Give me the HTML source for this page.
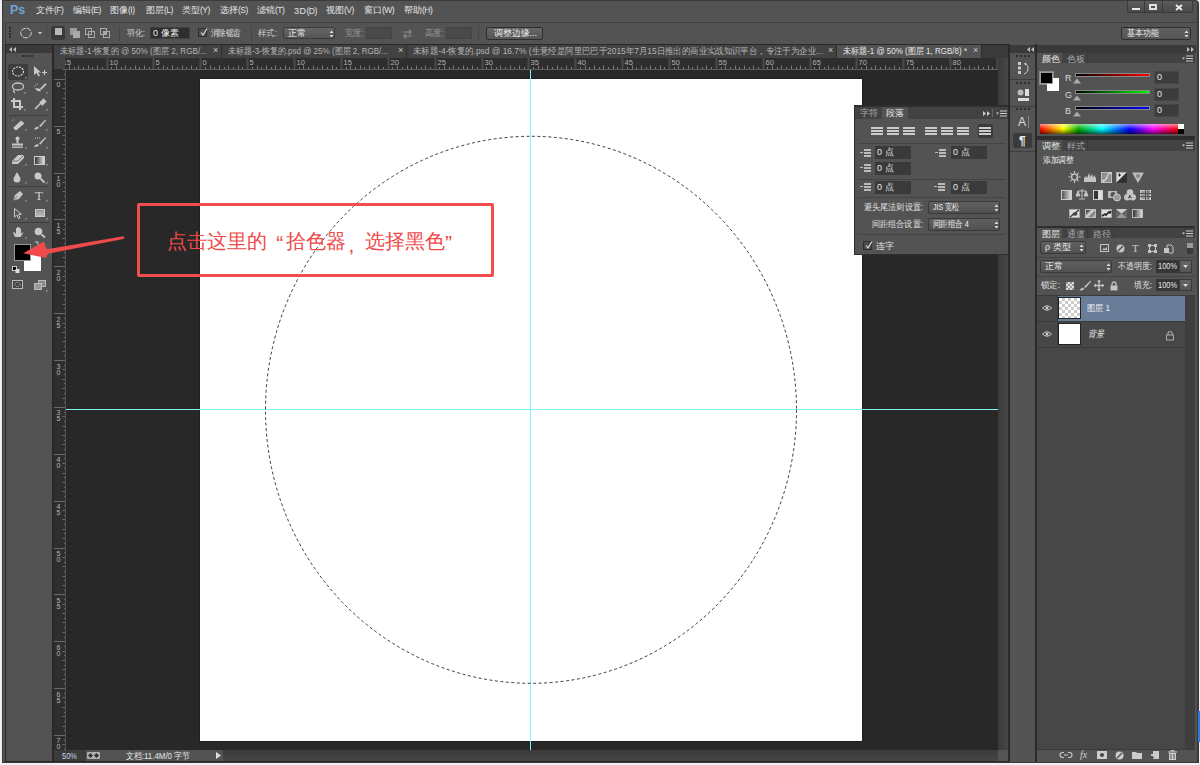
<!DOCTYPE html>
<html><head><meta charset="utf-8">
<style>
*{margin:0;padding:0;box-sizing:border-box}
html,body{width:1200px;height:765px;overflow:hidden;background:#eef0f4;font-family:"Liberation Sans",sans-serif;font-size:9px;color:#d8d8d8}
.a{position:absolute}
.t{white-space:nowrap;line-height:1}
svg{position:absolute;overflow:visible}
</style></head><body>

<div class="a" style="left:0px;top:0px;width:1200px;height:765px;background:#eef0f4;"></div>
<div class="a" style="left:2px;top:0px;width:1197px;height:763px;background:#3a3a3a;border-radius:0 4px 0 0;"></div>
<div class="a" style="left:3px;top:1px;width:1194px;height:761px;background:#535353;border-radius:0 3px 0 0;"></div>
<div class="a t" style="left:10px;top:4px;font-size:12.5px;font-weight:bold;color:#6fa6d8;letter-spacing:0px">Ps</div>
<div class="a t" style="left:36px;top:6px;font-size:9px;color:#e4e4e4">文件<span style="font-size:8.5px;letter-spacing:-0.5px;position:relative;top:-0.5px">(F)</span></div>
<div class="a t" style="left:73px;top:6px;font-size:9px;color:#e4e4e4">编辑<span style="font-size:8.5px;letter-spacing:-0.5px;position:relative;top:-0.5px">(E)</span></div>
<div class="a t" style="left:110px;top:6px;font-size:9px;color:#e4e4e4">图像<span style="font-size:8.5px;letter-spacing:-0.5px;position:relative;top:-0.5px">(I)</span></div>
<div class="a t" style="left:146px;top:6px;font-size:9px;color:#e4e4e4">图层<span style="font-size:8.5px;letter-spacing:-0.5px;position:relative;top:-0.5px">(L)</span></div>
<div class="a t" style="left:182px;top:6px;font-size:9px;color:#e4e4e4">类型<span style="font-size:8.5px;letter-spacing:-0.5px;position:relative;top:-0.5px">(Y)</span></div>
<div class="a t" style="left:220px;top:6px;font-size:9px;color:#e4e4e4">选择<span style="font-size:8.5px;letter-spacing:-0.5px;position:relative;top:-0.5px">(S)</span></div>
<div class="a t" style="left:257px;top:6px;font-size:9px;color:#e4e4e4">滤镜<span style="font-size:8.5px;letter-spacing:-0.5px;position:relative;top:-0.5px">(T)</span></div>
<div class="a t" style="left:294px;top:7px;font-size:9px;color:#e4e4e4;letter-spacing:0.5px">3D<span style="font-size:8.5px;letter-spacing:-0.5px;position:relative;top:-0.5px">(D)</span></div>
<div class="a t" style="left:326px;top:6px;font-size:9px;color:#e4e4e4">视图<span style="font-size:8.5px;letter-spacing:-0.5px;position:relative;top:-0.5px">(V)</span></div>
<div class="a t" style="left:364px;top:6px;font-size:9px;color:#e4e4e4">窗口<span style="font-size:8.5px;letter-spacing:-0.5px;position:relative;top:-0.5px">(W)</span></div>
<div class="a t" style="left:404px;top:6px;font-size:9px;color:#e4e4e4">帮助<span style="font-size:8.5px;letter-spacing:-0.5px;position:relative;top:-0.5px">(H)</span></div>
<div class="a" style="left:1127px;top:1px;width:66px;height:12px;background:linear-gradient(#5c5c5c,#4a4a4a);border:1px solid #3a3a3a;border-top:none;border-radius:0 0 3px 3px"></div>
<div class="a" style="left:1144px;top:1px;width:1px;height:12px;background:#3a3a3a;"></div>
<div class="a" style="left:1162px;top:1px;width:1px;height:12px;background:#3a3a3a;"></div>
<div class="a" style="left:1132px;top:8px;width:8px;height:2px;background:#e8e8e8;"></div>
<div class="a" style="left:1149px;top:4px;width:8px;height:6px;border:2px solid #e0e0e0;border-top-width:2px"></div>
<svg style="left:1175px;top:4px" width="8" height="7"><path d="M1 1L7 6M7 1L1 6" stroke="#eee" stroke-width="1.8"/></svg>
<div class="a" style="left:5px;top:22px;width:1191px;height:1px;background:#404040;"></div>
<div class="a" style="left:5px;top:22px;width:1px;height:22px;background:#3c3c3c;"></div>
<div class="a" style="left:9px;top:27px;width:2px;height:2px;background:#2a2a2a;"></div>
<div class="a" style="left:9px;top:30px;width:2px;height:2px;background:#2a2a2a;"></div>
<div class="a" style="left:9px;top:33px;width:2px;height:2px;background:#2a2a2a;"></div>
<div class="a" style="left:9px;top:36px;width:2px;height:2px;background:#2a2a2a;"></div>
<svg style="left:18px;top:26px" width="16" height="14"><ellipse cx="8" cy="7" rx="5.3" ry="4.8" fill="none" stroke="#ddd" stroke-width="0.9" stroke-dasharray="5 1"/></svg>
<svg style="left:38px;top:32px" width="6" height="4"><path d="M0 0h4l-2 2.5z" fill="#ccc"/></svg>
<div class="a" style="left:46px;top:26px;width:1px;height:15px;background:#464646;"></div>
<div class="a" style="left:51px;top:26px;width:14px;height:14px;background:#3a3a3a;border-radius:2px;"></div>
<div class="a" style="left:55px;top:28px;width:7px;height:7px;background:#b8b8b8;"></div>
<svg style="left:69px;top:27px" width="12" height="12"><rect x="1" y="1" width="7" height="7" fill="#999"/><rect x="4" y="4" width="7" height="7" fill="#aaa"/></svg>
<svg style="left:84px;top:27px" width="12" height="12"><rect x="1.5" y="1.5" width="6" height="6" fill="none" stroke="#aaa"/><rect x="4.5" y="4.5" width="6" height="6" fill="none" stroke="#aaa"/></svg>
<svg style="left:99px;top:27px" width="12" height="12"><rect x="1.5" y="1.5" width="6" height="6" fill="none" stroke="#aaa"/><rect x="4.5" y="4.5" width="6" height="6" fill="none" stroke="#aaa"/><rect x="4.5" y="4.5" width="3" height="3" fill="#aaa"/></svg>
<div class="a" style="left:119px;top:26px;width:1px;height:15px;background:#464646;"></div>
<div class="a t" style="left:127px;top:29px;font-size:9px;color:#d0d0d0;transform-origin:0 0;transform:scaleX(0.8774);">羽化:</div>
<div class="a" style="left:150px;top:27px;width:40px;height:12px;background:#2e2e2e;border:1px solid #404040;"></div>
<div class="a t" style="left:153px;top:29px;font-size:9px;color:#e8e8e8;">0 像素</div>
<div class="a" style="left:198px;top:28px;width:9px;height:9px;background:#4a4a4a;border:1px solid #2e2e2e;"></div>
<svg style="left:199px;top:28px" width="9" height="9"><path d="M2 4.5L4 7L8 0.5" fill="none" stroke="#ddd" stroke-width="1.2"/></svg>
<div class="a t" style="left:211px;top:29px;font-size:9px;color:#e0e0e0;transform-origin:0 0;transform:scaleX(0.8333);">消除锯齿</div>
<div class="a" style="left:251px;top:26px;width:1px;height:15px;background:#464646;"></div>
<div class="a t" style="left:258px;top:29px;font-size:9px;color:#d0d0d0;transform-origin:0 0;transform:scaleX(0.9261);">样式:</div>
<div class="a" style="left:283px;top:27px;width:52px;height:12px;background:linear-gradient(#666,#555);border:1px solid #3a3a3a;border-radius:2px"></div>
<div class="a t" style="left:288px;top:29px;font-size:9px;color:#f0f0f0;">正常</div>
<svg style="left:329px;top:30px" width="5" height="8"><path d="M0.5 3L2.5 0.5L4.5 3ZM0.5 5L2.5 7.5L4.5 5Z" fill="#ddd"/></svg>
<div class="a t" style="left:345px;top:29px;font-size:9px;color:#9a9a9a;transform-origin:0 0;transform:scaleX(0.9261);">宽度:</div>
<div class="a" style="left:366px;top:27px;width:26px;height:12px;background:#4a4a4a;border:1px solid #444;"></div>
<svg style="left:402px;top:29px" width="11" height="10"><path d="M1 3h8M7 1l2 2l-2 2M10 7H2M4 5L2 7l2 2" fill="none" stroke="#8a8a8a" stroke-width="1.2"/></svg>
<div class="a t" style="left:425px;top:29px;font-size:9px;color:#9a9a9a;transform-origin:0 0;transform:scaleX(0.9261);">高度:</div>
<div class="a" style="left:446px;top:27px;width:26px;height:12px;background:#4a4a4a;border:1px solid #444;"></div>
<div class="a" style="left:478px;top:26px;width:1px;height:15px;background:#464646;"></div>
<div class="a" style="left:486px;top:27px;width:57px;height:13px;background:linear-gradient(#666,#555);border:1px solid #2e2e2e;border-radius:2px"></div>
<div class="a t" style="left:494px;top:29px;font-size:9px;color:#f0f0f0;transform-origin:0 0;transform:scaleX(0.9882);">调整边缘...</div>
<div class="a" style="left:1121px;top:27px;width:70px;height:13px;background:linear-gradient(#606060,#555);border:1px solid #2e2e2e;border-radius:2px"></div>
<div class="a t" style="left:1127px;top:29px;font-size:9px;color:#f0f0f0;transform-origin:0 0;transform:scaleX(0.8889);">基本功能</div>
<svg style="left:1184px;top:30px" width="5" height="8"><path d="M0.5 3L2.5 0.5L4.5 3ZM0.5 5L2.5 7.5L4.5 5Z" fill="#ddd"/></svg>
<div class="a" style="left:5px;top:44px;width:49px;height:718px;background:#282828;"></div>
<div class="a" style="left:6px;top:45px;width:46px;height:8px;background:#3a3a3a;"></div>
<svg style="left:9px;top:47px" width="8" height="5"><path d="M3 0L0 2.5L3 5zM7 0L4 2.5L7 5z" fill="#bbb"/></svg>
<div class="a" style="left:6px;top:53px;width:46px;height:708px;background:#535353;"></div>
<div class="a" style="left:22px;top:55px;width:2px;height:2px;background:#2e2e2e;"></div>
<div class="a" style="left:25px;top:55px;width:2px;height:2px;background:#2e2e2e;"></div>
<div class="a" style="left:28px;top:55px;width:2px;height:2px;background:#2e2e2e;"></div>
<div class="a" style="left:31px;top:55px;width:2px;height:2px;background:#2e2e2e;"></div>
<div class="a" style="left:54px;top:44px;width:956px;height:718px;background:#282828;"></div>
<div class="a" style="left:54px;top:45px;width:954px;height:13px;background:#3a3a3a;"></div>
<div class="a" style="left:54px;top:45px;width:168px;height:13px;background:#424242;border-right:1px solid #2e2e2e;"></div>
<div class="a t" style="left:60px;top:47px;font-size:9px;color:#b4b4b4;transform-origin:0 0;transform:scaleX(0.9037);">未标题-1-恢复的 @ 50% (图层 2, RGB/...</div>
<div class="a t" style="left:213px;top:46px;font-size:9px;color:#ccc;">×</div>
<div class="a" style="left:222px;top:45px;width:185px;height:13px;background:#424242;border-right:1px solid #2e2e2e;"></div>
<div class="a t" style="left:228px;top:47px;font-size:9px;color:#b4b4b4;transform-origin:0 0;transform:scaleX(0.8905);">未标题-3-恢复的.psd @ 25% (图层 2, RGB/...</div>
<div class="a t" style="left:398px;top:46px;font-size:9px;color:#ccc;">×</div>
<div class="a" style="left:407px;top:45px;width:430px;height:13px;background:#424242;border-right:1px solid #2e2e2e;"></div>
<div class="a t" style="left:413px;top:47px;font-size:9px;color:#b4b4b4;transform-origin:0 0;transform:scaleX(0.9324);">未标题-4-恢复的.psd @ 16.7% (生意经是阿里巴巴于2015年7月15日推出的商业实战知识平台，专注于为企业...</div>
<div class="a t" style="left:828px;top:46px;font-size:9px;color:#ccc;">×</div>
<div class="a" style="left:837px;top:45px;width:145px;height:13px;background:#535353;border-right:1px solid #2e2e2e;"></div>
<div class="a t" style="left:843px;top:47px;font-size:9px;color:#e8e8e8;transform-origin:0 0;transform:scaleX(0.8910);">未标题-1 @ 50% (图层 1, RGB/8) *</div>
<div class="a t" style="left:973px;top:46px;font-size:9px;color:#ccc;">×</div>
<div class="a" style="left:54px;top:58px;width:944px;height:12px;background:#2e2e2e;"></div>
<div class="a" style="left:54px;top:58px;width:12px;height:692px;background:#2e2e2e;"></div>
<div class="a" style="left:54px;top:58px;width:11px;height:11px;background:#444;"></div>
<svg style="left:0;top:0" width="1200" height="765"><defs><clipPath id="hr"><rect x="65" y="58" width="933" height="12"/></clipPath><clipPath id="vr"><rect x="54" y="69" width="12" height="681"/></clipPath></defs><g clip-path="url(#hr)" stroke="#7a7a7a" stroke-width="1"><line x1="50.5" y1="65.5" x2="50.5" y2="69"/><line x1="55.5" y1="67" x2="55.5" y2="69"/><line x1="60.5" y1="58" x2="60.5" y2="69" stroke="#4a4a4a" stroke-width="2"/><line x1="64.5" y1="67" x2="64.5" y2="69"/><line x1="69.5" y1="65.5" x2="69.5" y2="69"/><line x1="74.5" y1="67" x2="74.5" y2="69"/><line x1="78.5" y1="65.5" x2="78.5" y2="69"/><line x1="83.5" y1="67" x2="83.5" y2="69"/><line x1="88.5" y1="65.5" x2="88.5" y2="69"/><line x1="92.5" y1="67" x2="92.5" y2="69"/><line x1="97.5" y1="65.5" x2="97.5" y2="69"/><line x1="102.5" y1="67" x2="102.5" y2="69"/><line x1="107.5" y1="58" x2="107.5" y2="69" stroke="#4a4a4a" stroke-width="2"/><line x1="111.5" y1="67" x2="111.5" y2="69"/><line x1="116.5" y1="65.5" x2="116.5" y2="69"/><line x1="121.5" y1="67" x2="121.5" y2="69"/><line x1="125.5" y1="65.5" x2="125.5" y2="69"/><line x1="130.5" y1="67" x2="130.5" y2="69"/><line x1="135.5" y1="65.5" x2="135.5" y2="69"/><line x1="139.5" y1="67" x2="139.5" y2="69"/><line x1="144.5" y1="65.5" x2="144.5" y2="69"/><line x1="149.5" y1="67" x2="149.5" y2="69"/><line x1="153.5" y1="58" x2="153.5" y2="69" stroke="#4a4a4a" stroke-width="2"/><line x1="158.5" y1="67" x2="158.5" y2="69"/><line x1="163.5" y1="65.5" x2="163.5" y2="69"/><line x1="167.5" y1="67" x2="167.5" y2="69"/><line x1="172.5" y1="65.5" x2="172.5" y2="69"/><line x1="177.5" y1="67" x2="177.5" y2="69"/><line x1="182.5" y1="65.5" x2="182.5" y2="69"/><line x1="186.5" y1="67" x2="186.5" y2="69"/><line x1="191.5" y1="65.5" x2="191.5" y2="69"/><line x1="196.5" y1="67" x2="196.5" y2="69"/><line x1="200.5" y1="58" x2="200.5" y2="69" stroke="#4a4a4a" stroke-width="2"/><line x1="205.5" y1="67" x2="205.5" y2="69"/><line x1="210.5" y1="65.5" x2="210.5" y2="69"/><line x1="214.5" y1="67" x2="214.5" y2="69"/><line x1="219.5" y1="65.5" x2="219.5" y2="69"/><line x1="224.5" y1="67" x2="224.5" y2="69"/><line x1="228.5" y1="65.5" x2="228.5" y2="69"/><line x1="233.5" y1="67" x2="233.5" y2="69"/><line x1="238.5" y1="65.5" x2="238.5" y2="69"/><line x1="242.5" y1="67" x2="242.5" y2="69"/><line x1="247.5" y1="58" x2="247.5" y2="69" stroke="#4a4a4a" stroke-width="2"/><line x1="252.5" y1="67" x2="252.5" y2="69"/><line x1="257.5" y1="65.5" x2="257.5" y2="69"/><line x1="261.5" y1="67" x2="261.5" y2="69"/><line x1="266.5" y1="65.5" x2="266.5" y2="69"/><line x1="271.5" y1="67" x2="271.5" y2="69"/><line x1="275.5" y1="65.5" x2="275.5" y2="69"/><line x1="280.5" y1="67" x2="280.5" y2="69"/><line x1="285.5" y1="65.5" x2="285.5" y2="69"/><line x1="289.5" y1="67" x2="289.5" y2="69"/><line x1="294.5" y1="58" x2="294.5" y2="69" stroke="#4a4a4a" stroke-width="2"/><line x1="299.5" y1="67" x2="299.5" y2="69"/><line x1="303.5" y1="65.5" x2="303.5" y2="69"/><line x1="308.5" y1="67" x2="308.5" y2="69"/><line x1="313.5" y1="65.5" x2="313.5" y2="69"/><line x1="317.5" y1="67" x2="317.5" y2="69"/><line x1="322.5" y1="65.5" x2="322.5" y2="69"/><line x1="327.5" y1="67" x2="327.5" y2="69"/><line x1="332.5" y1="65.5" x2="332.5" y2="69"/><line x1="336.5" y1="67" x2="336.5" y2="69"/><line x1="341.5" y1="58" x2="341.5" y2="69" stroke="#4a4a4a" stroke-width="2"/><line x1="346.5" y1="67" x2="346.5" y2="69"/><line x1="350.5" y1="65.5" x2="350.5" y2="69"/><line x1="355.5" y1="67" x2="355.5" y2="69"/><line x1="360.5" y1="65.5" x2="360.5" y2="69"/><line x1="364.5" y1="67" x2="364.5" y2="69"/><line x1="369.5" y1="65.5" x2="369.5" y2="69"/><line x1="374.5" y1="67" x2="374.5" y2="69"/><line x1="378.5" y1="65.5" x2="378.5" y2="69"/><line x1="383.5" y1="67" x2="383.5" y2="69"/><line x1="388.5" y1="58" x2="388.5" y2="69" stroke="#4a4a4a" stroke-width="2"/><line x1="392.5" y1="67" x2="392.5" y2="69"/><line x1="397.5" y1="65.5" x2="397.5" y2="69"/><line x1="402.5" y1="67" x2="402.5" y2="69"/><line x1="407.5" y1="65.5" x2="407.5" y2="69"/><line x1="411.5" y1="67" x2="411.5" y2="69"/><line x1="416.5" y1="65.5" x2="416.5" y2="69"/><line x1="421.5" y1="67" x2="421.5" y2="69"/><line x1="425.5" y1="65.5" x2="425.5" y2="69"/><line x1="430.5" y1="67" x2="430.5" y2="69"/><line x1="435.5" y1="58" x2="435.5" y2="69" stroke="#4a4a4a" stroke-width="2"/><line x1="439.5" y1="67" x2="439.5" y2="69"/><line x1="444.5" y1="65.5" x2="444.5" y2="69"/><line x1="449.5" y1="67" x2="449.5" y2="69"/><line x1="453.5" y1="65.5" x2="453.5" y2="69"/><line x1="458.5" y1="67" x2="458.5" y2="69"/><line x1="463.5" y1="65.5" x2="463.5" y2="69"/><line x1="467.5" y1="67" x2="467.5" y2="69"/><line x1="472.5" y1="65.5" x2="472.5" y2="69"/><line x1="477.5" y1="67" x2="477.5" y2="69"/><line x1="482.5" y1="58" x2="482.5" y2="69" stroke="#4a4a4a" stroke-width="2"/><line x1="486.5" y1="67" x2="486.5" y2="69"/><line x1="491.5" y1="65.5" x2="491.5" y2="69"/><line x1="496.5" y1="67" x2="496.5" y2="69"/><line x1="500.5" y1="65.5" x2="500.5" y2="69"/><line x1="505.5" y1="67" x2="505.5" y2="69"/><line x1="510.5" y1="65.5" x2="510.5" y2="69"/><line x1="514.5" y1="67" x2="514.5" y2="69"/><line x1="519.5" y1="65.5" x2="519.5" y2="69"/><line x1="524.5" y1="67" x2="524.5" y2="69"/><line x1="528.5" y1="58" x2="528.5" y2="69" stroke="#4a4a4a" stroke-width="2"/><line x1="533.5" y1="67" x2="533.5" y2="69"/><line x1="538.5" y1="65.5" x2="538.5" y2="69"/><line x1="542.5" y1="67" x2="542.5" y2="69"/><line x1="547.5" y1="65.5" x2="547.5" y2="69"/><line x1="552.5" y1="67" x2="552.5" y2="69"/><line x1="557.5" y1="65.5" x2="557.5" y2="69"/><line x1="561.5" y1="67" x2="561.5" y2="69"/><line x1="566.5" y1="65.5" x2="566.5" y2="69"/><line x1="571.5" y1="67" x2="571.5" y2="69"/><line x1="575.5" y1="58" x2="575.5" y2="69" stroke="#4a4a4a" stroke-width="2"/><line x1="580.5" y1="67" x2="580.5" y2="69"/><line x1="585.5" y1="65.5" x2="585.5" y2="69"/><line x1="589.5" y1="67" x2="589.5" y2="69"/><line x1="594.5" y1="65.5" x2="594.5" y2="69"/><line x1="599.5" y1="67" x2="599.5" y2="69"/><line x1="603.5" y1="65.5" x2="603.5" y2="69"/><line x1="608.5" y1="67" x2="608.5" y2="69"/><line x1="613.5" y1="65.5" x2="613.5" y2="69"/><line x1="617.5" y1="67" x2="617.5" y2="69"/><line x1="622.5" y1="58" x2="622.5" y2="69" stroke="#4a4a4a" stroke-width="2"/><line x1="627.5" y1="67" x2="627.5" y2="69"/><line x1="632.5" y1="65.5" x2="632.5" y2="69"/><line x1="636.5" y1="67" x2="636.5" y2="69"/><line x1="641.5" y1="65.5" x2="641.5" y2="69"/><line x1="646.5" y1="67" x2="646.5" y2="69"/><line x1="650.5" y1="65.5" x2="650.5" y2="69"/><line x1="655.5" y1="67" x2="655.5" y2="69"/><line x1="660.5" y1="65.5" x2="660.5" y2="69"/><line x1="664.5" y1="67" x2="664.5" y2="69"/><line x1="669.5" y1="58" x2="669.5" y2="69" stroke="#4a4a4a" stroke-width="2"/><line x1="674.5" y1="67" x2="674.5" y2="69"/><line x1="678.5" y1="65.5" x2="678.5" y2="69"/><line x1="683.5" y1="67" x2="683.5" y2="69"/><line x1="688.5" y1="65.5" x2="688.5" y2="69"/><line x1="692.5" y1="67" x2="692.5" y2="69"/><line x1="697.5" y1="65.5" x2="697.5" y2="69"/><line x1="702.5" y1="67" x2="702.5" y2="69"/><line x1="706.5" y1="65.5" x2="706.5" y2="69"/><line x1="711.5" y1="67" x2="711.5" y2="69"/><line x1="716.5" y1="58" x2="716.5" y2="69" stroke="#4a4a4a" stroke-width="2"/><line x1="721.5" y1="67" x2="721.5" y2="69"/><line x1="725.5" y1="65.5" x2="725.5" y2="69"/><line x1="730.5" y1="67" x2="730.5" y2="69"/><line x1="735.5" y1="65.5" x2="735.5" y2="69"/><line x1="739.5" y1="67" x2="739.5" y2="69"/><line x1="744.5" y1="65.5" x2="744.5" y2="69"/><line x1="749.5" y1="67" x2="749.5" y2="69"/><line x1="753.5" y1="65.5" x2="753.5" y2="69"/><line x1="758.5" y1="67" x2="758.5" y2="69"/><line x1="763.5" y1="58" x2="763.5" y2="69" stroke="#4a4a4a" stroke-width="2"/><line x1="767.5" y1="67" x2="767.5" y2="69"/><line x1="772.5" y1="65.5" x2="772.5" y2="69"/><line x1="777.5" y1="67" x2="777.5" y2="69"/><line x1="781.5" y1="65.5" x2="781.5" y2="69"/><line x1="786.5" y1="67" x2="786.5" y2="69"/><line x1="791.5" y1="65.5" x2="791.5" y2="69"/><line x1="796.5" y1="67" x2="796.5" y2="69"/><line x1="800.5" y1="65.5" x2="800.5" y2="69"/><line x1="805.5" y1="67" x2="805.5" y2="69"/><line x1="810.5" y1="58" x2="810.5" y2="69" stroke="#4a4a4a" stroke-width="2"/><line x1="814.5" y1="67" x2="814.5" y2="69"/><line x1="819.5" y1="65.5" x2="819.5" y2="69"/><line x1="824.5" y1="67" x2="824.5" y2="69"/><line x1="828.5" y1="65.5" x2="828.5" y2="69"/><line x1="833.5" y1="67" x2="833.5" y2="69"/><line x1="838.5" y1="65.5" x2="838.5" y2="69"/><line x1="842.5" y1="67" x2="842.5" y2="69"/><line x1="847.5" y1="65.5" x2="847.5" y2="69"/><line x1="852.5" y1="67" x2="852.5" y2="69"/><line x1="856.5" y1="58" x2="856.5" y2="69" stroke="#4a4a4a" stroke-width="2"/><line x1="861.5" y1="67" x2="861.5" y2="69"/><line x1="866.5" y1="65.5" x2="866.5" y2="69"/><line x1="871.5" y1="67" x2="871.5" y2="69"/><line x1="875.5" y1="65.5" x2="875.5" y2="69"/><line x1="880.5" y1="67" x2="880.5" y2="69"/><line x1="885.5" y1="65.5" x2="885.5" y2="69"/><line x1="889.5" y1="67" x2="889.5" y2="69"/><line x1="894.5" y1="65.5" x2="894.5" y2="69"/><line x1="899.5" y1="67" x2="899.5" y2="69"/><line x1="903.5" y1="58" x2="903.5" y2="69" stroke="#4a4a4a" stroke-width="2"/><line x1="908.5" y1="67" x2="908.5" y2="69"/><line x1="913.5" y1="65.5" x2="913.5" y2="69"/><line x1="917.5" y1="67" x2="917.5" y2="69"/><line x1="922.5" y1="65.5" x2="922.5" y2="69"/><line x1="927.5" y1="67" x2="927.5" y2="69"/><line x1="931.5" y1="65.5" x2="931.5" y2="69"/><line x1="936.5" y1="67" x2="936.5" y2="69"/><line x1="941.5" y1="65.5" x2="941.5" y2="69"/><line x1="946.5" y1="67" x2="946.5" y2="69"/><line x1="950.5" y1="58" x2="950.5" y2="69" stroke="#4a4a4a" stroke-width="2"/><line x1="955.5" y1="67" x2="955.5" y2="69"/><line x1="960.5" y1="65.5" x2="960.5" y2="69"/><line x1="964.5" y1="67" x2="964.5" y2="69"/><line x1="969.5" y1="65.5" x2="969.5" y2="69"/><line x1="974.5" y1="67" x2="974.5" y2="69"/><line x1="978.5" y1="65.5" x2="978.5" y2="69"/><line x1="983.5" y1="67" x2="983.5" y2="69"/><line x1="988.5" y1="65.5" x2="988.5" y2="69"/><line x1="992.5" y1="67" x2="992.5" y2="69"/><line x1="997.5" y1="58" x2="997.5" y2="69" stroke="#4a4a4a" stroke-width="2"/><line x1="1002.5" y1="67" x2="1002.5" y2="69"/><line x1="1006.5" y1="65.5" x2="1006.5" y2="69"/></g><g clip-path="url(#hr)" fill="#b0b0b0" font-size="7.5" font-family="Liberation Sans"><text x="62.5" y="64.8">15</text><text x="109.5" y="64.8">10</text><text x="155.5" y="64.8">5</text><text x="202.5" y="64.8">0</text><text x="249.5" y="64.8">5</text><text x="296.5" y="64.8">10</text><text x="343.5" y="64.8">15</text><text x="390.5" y="64.8">20</text><text x="437.5" y="64.8">25</text><text x="484.5" y="64.8">30</text><text x="530.5" y="64.8">35</text><text x="577.5" y="64.8">40</text><text x="624.5" y="64.8">45</text><text x="671.5" y="64.8">50</text><text x="718.5" y="64.8">55</text><text x="765.5" y="64.8">60</text><text x="812.5" y="64.8">65</text><text x="858.5" y="64.8">70</text><text x="905.5" y="64.8">75</text><text x="952.5" y="64.8">80</text><text x="999.5" y="64.8">85</text></g><line x1="65" y1="69.5" x2="998" y2="69.5" stroke="#5e5e5e"/><g clip-path="url(#vr)" stroke="#6a6a6a" stroke-width="1"><line x1="62.5" y1="60.5" x2="66" y2="60.5"/><line x1="64" y1="65.5" x2="66" y2="65.5"/><line x1="62.5" y1="69.5" x2="66" y2="69.5"/><line x1="64" y1="74.5" x2="66" y2="74.5"/><line x1="54" y1="79.5" x2="66" y2="79.5"/><line x1="64" y1="83.5" x2="66" y2="83.5"/><line x1="62.5" y1="88.5" x2="66" y2="88.5"/><line x1="64" y1="93.5" x2="66" y2="93.5"/><line x1="62.5" y1="98.5" x2="66" y2="98.5"/><line x1="64" y1="102.5" x2="66" y2="102.5"/><line x1="62.5" y1="107.5" x2="66" y2="107.5"/><line x1="64" y1="112.5" x2="66" y2="112.5"/><line x1="62.5" y1="116.5" x2="66" y2="116.5"/><line x1="64" y1="121.5" x2="66" y2="121.5"/><line x1="54" y1="126.5" x2="66" y2="126.5"/><line x1="64" y1="130.5" x2="66" y2="130.5"/><line x1="62.5" y1="135.5" x2="66" y2="135.5"/><line x1="64" y1="140.5" x2="66" y2="140.5"/><line x1="62.5" y1="144.5" x2="66" y2="144.5"/><line x1="64" y1="149.5" x2="66" y2="149.5"/><line x1="62.5" y1="154.5" x2="66" y2="154.5"/><line x1="64" y1="158.5" x2="66" y2="158.5"/><line x1="62.5" y1="163.5" x2="66" y2="163.5"/><line x1="64" y1="168.5" x2="66" y2="168.5"/><line x1="54" y1="173.5" x2="66" y2="173.5"/><line x1="64" y1="177.5" x2="66" y2="177.5"/><line x1="62.5" y1="182.5" x2="66" y2="182.5"/><line x1="64" y1="187.5" x2="66" y2="187.5"/><line x1="62.5" y1="191.5" x2="66" y2="191.5"/><line x1="64" y1="196.5" x2="66" y2="196.5"/><line x1="62.5" y1="201.5" x2="66" y2="201.5"/><line x1="64" y1="205.5" x2="66" y2="205.5"/><line x1="62.5" y1="210.5" x2="66" y2="210.5"/><line x1="64" y1="215.5" x2="66" y2="215.5"/><line x1="54" y1="219.5" x2="66" y2="219.5"/><line x1="64" y1="224.5" x2="66" y2="224.5"/><line x1="62.5" y1="229.5" x2="66" y2="229.5"/><line x1="64" y1="233.5" x2="66" y2="233.5"/><line x1="62.5" y1="238.5" x2="66" y2="238.5"/><line x1="64" y1="243.5" x2="66" y2="243.5"/><line x1="62.5" y1="248.5" x2="66" y2="248.5"/><line x1="64" y1="252.5" x2="66" y2="252.5"/><line x1="62.5" y1="257.5" x2="66" y2="257.5"/><line x1="64" y1="262.5" x2="66" y2="262.5"/><line x1="54" y1="266.5" x2="66" y2="266.5"/><line x1="64" y1="271.5" x2="66" y2="271.5"/><line x1="62.5" y1="276.5" x2="66" y2="276.5"/><line x1="64" y1="280.5" x2="66" y2="280.5"/><line x1="62.5" y1="285.5" x2="66" y2="285.5"/><line x1="64" y1="290.5" x2="66" y2="290.5"/><line x1="62.5" y1="294.5" x2="66" y2="294.5"/><line x1="64" y1="299.5" x2="66" y2="299.5"/><line x1="62.5" y1="304.5" x2="66" y2="304.5"/><line x1="64" y1="308.5" x2="66" y2="308.5"/><line x1="54" y1="313.5" x2="66" y2="313.5"/><line x1="64" y1="318.5" x2="66" y2="318.5"/><line x1="62.5" y1="323.5" x2="66" y2="323.5"/><line x1="64" y1="327.5" x2="66" y2="327.5"/><line x1="62.5" y1="332.5" x2="66" y2="332.5"/><line x1="64" y1="337.5" x2="66" y2="337.5"/><line x1="62.5" y1="341.5" x2="66" y2="341.5"/><line x1="64" y1="346.5" x2="66" y2="346.5"/><line x1="62.5" y1="351.5" x2="66" y2="351.5"/><line x1="64" y1="355.5" x2="66" y2="355.5"/><line x1="54" y1="360.5" x2="66" y2="360.5"/><line x1="64" y1="365.5" x2="66" y2="365.5"/><line x1="62.5" y1="369.5" x2="66" y2="369.5"/><line x1="64" y1="374.5" x2="66" y2="374.5"/><line x1="62.5" y1="379.5" x2="66" y2="379.5"/><line x1="64" y1="383.5" x2="66" y2="383.5"/><line x1="62.5" y1="388.5" x2="66" y2="388.5"/><line x1="64" y1="393.5" x2="66" y2="393.5"/><line x1="62.5" y1="398.5" x2="66" y2="398.5"/><line x1="64" y1="402.5" x2="66" y2="402.5"/><line x1="54" y1="407.5" x2="66" y2="407.5"/><line x1="64" y1="412.5" x2="66" y2="412.5"/><line x1="62.5" y1="416.5" x2="66" y2="416.5"/><line x1="64" y1="421.5" x2="66" y2="421.5"/><line x1="62.5" y1="426.5" x2="66" y2="426.5"/><line x1="64" y1="430.5" x2="66" y2="430.5"/><line x1="62.5" y1="435.5" x2="66" y2="435.5"/><line x1="64" y1="440.5" x2="66" y2="440.5"/><line x1="62.5" y1="444.5" x2="66" y2="444.5"/><line x1="64" y1="449.5" x2="66" y2="449.5"/><line x1="54" y1="454.5" x2="66" y2="454.5"/><line x1="64" y1="458.5" x2="66" y2="458.5"/><line x1="62.5" y1="463.5" x2="66" y2="463.5"/><line x1="64" y1="468.5" x2="66" y2="468.5"/><line x1="62.5" y1="473.5" x2="66" y2="473.5"/><line x1="64" y1="477.5" x2="66" y2="477.5"/><line x1="62.5" y1="482.5" x2="66" y2="482.5"/><line x1="64" y1="487.5" x2="66" y2="487.5"/><line x1="62.5" y1="491.5" x2="66" y2="491.5"/><line x1="64" y1="496.5" x2="66" y2="496.5"/><line x1="54" y1="501.5" x2="66" y2="501.5"/><line x1="64" y1="505.5" x2="66" y2="505.5"/><line x1="62.5" y1="510.5" x2="66" y2="510.5"/><line x1="64" y1="515.5" x2="66" y2="515.5"/><line x1="62.5" y1="519.5" x2="66" y2="519.5"/><line x1="64" y1="524.5" x2="66" y2="524.5"/><line x1="62.5" y1="529.5" x2="66" y2="529.5"/><line x1="64" y1="533.5" x2="66" y2="533.5"/><line x1="62.5" y1="538.5" x2="66" y2="538.5"/><line x1="64" y1="543.5" x2="66" y2="543.5"/><line x1="54" y1="548.5" x2="66" y2="548.5"/><line x1="64" y1="552.5" x2="66" y2="552.5"/><line x1="62.5" y1="557.5" x2="66" y2="557.5"/><line x1="64" y1="562.5" x2="66" y2="562.5"/><line x1="62.5" y1="566.5" x2="66" y2="566.5"/><line x1="64" y1="571.5" x2="66" y2="571.5"/><line x1="62.5" y1="576.5" x2="66" y2="576.5"/><line x1="64" y1="580.5" x2="66" y2="580.5"/><line x1="62.5" y1="585.5" x2="66" y2="585.5"/><line x1="64" y1="590.5" x2="66" y2="590.5"/><line x1="54" y1="594.5" x2="66" y2="594.5"/><line x1="64" y1="599.5" x2="66" y2="599.5"/><line x1="62.5" y1="604.5" x2="66" y2="604.5"/><line x1="64" y1="608.5" x2="66" y2="608.5"/><line x1="62.5" y1="613.5" x2="66" y2="613.5"/><line x1="64" y1="618.5" x2="66" y2="618.5"/><line x1="62.5" y1="622.5" x2="66" y2="622.5"/><line x1="64" y1="627.5" x2="66" y2="627.5"/><line x1="62.5" y1="632.5" x2="66" y2="632.5"/><line x1="64" y1="637.5" x2="66" y2="637.5"/><line x1="54" y1="641.5" x2="66" y2="641.5"/><line x1="64" y1="646.5" x2="66" y2="646.5"/><line x1="62.5" y1="651.5" x2="66" y2="651.5"/><line x1="64" y1="655.5" x2="66" y2="655.5"/><line x1="62.5" y1="660.5" x2="66" y2="660.5"/><line x1="64" y1="665.5" x2="66" y2="665.5"/><line x1="62.5" y1="669.5" x2="66" y2="669.5"/><line x1="64" y1="674.5" x2="66" y2="674.5"/><line x1="62.5" y1="679.5" x2="66" y2="679.5"/><line x1="64" y1="683.5" x2="66" y2="683.5"/><line x1="54" y1="688.5" x2="66" y2="688.5"/><line x1="64" y1="693.5" x2="66" y2="693.5"/><line x1="62.5" y1="697.5" x2="66" y2="697.5"/><line x1="64" y1="702.5" x2="66" y2="702.5"/><line x1="62.5" y1="707.5" x2="66" y2="707.5"/><line x1="64" y1="712.5" x2="66" y2="712.5"/><line x1="62.5" y1="716.5" x2="66" y2="716.5"/><line x1="64" y1="721.5" x2="66" y2="721.5"/><line x1="62.5" y1="726.5" x2="66" y2="726.5"/><line x1="64" y1="730.5" x2="66" y2="730.5"/><line x1="54" y1="735.5" x2="66" y2="735.5"/><line x1="64" y1="740.5" x2="66" y2="740.5"/><line x1="62.5" y1="744.5" x2="66" y2="744.5"/><line x1="64" y1="749.5" x2="66" y2="749.5"/><line x1="62.5" y1="754.5" x2="66" y2="754.5"/><line x1="64" y1="758.5" x2="66" y2="758.5"/><line x1="62.5" y1="763.5" x2="66" y2="763.5"/><line x1="64" y1="768.5" x2="66" y2="768.5"/><line x1="62.5" y1="772.5" x2="66" y2="772.5"/></g><g clip-path="url(#vr)" fill="#b8b8b8" font-size="7" font-family="Liberation Sans"><text x="56.5" y="86.5">0</text><text x="56.5" y="133.5">5</text><text x="56.5" y="180.5">1</text><text x="56.5" y="186.5">0</text><text x="56.5" y="227.5">1</text><text x="56.5" y="233.5">5</text><text x="56.5" y="274.5">2</text><text x="56.5" y="280.5">0</text><text x="56.5" y="321.5">2</text><text x="56.5" y="327.5">5</text><text x="56.5" y="368.5">3</text><text x="56.5" y="374.5">0</text><text x="56.5" y="414.5">3</text><text x="56.5" y="420.5">5</text><text x="56.5" y="461.5">4</text><text x="56.5" y="467.5">0</text><text x="56.5" y="508.5">4</text><text x="56.5" y="514.5">5</text><text x="56.5" y="555.5">5</text><text x="56.5" y="561.5">0</text><text x="56.5" y="602.5">5</text><text x="56.5" y="608.5">5</text><text x="56.5" y="649.5">6</text><text x="56.5" y="655.5">0</text><text x="56.5" y="696.5">6</text><text x="56.5" y="702.5">5</text><text x="56.5" y="742.5">7</text><text x="56.5" y="748.5">0</text></g><line x1="65.5" y1="69" x2="65.5" y2="750" stroke="#555"/></svg>
<div class="a" style="left:66px;top:70px;width:932px;height:680px;background:#282828;"></div>
<div class="a" style="left:199px;top:78px;width:664px;height:664px;background:#1e1e1e;"></div>
<div class="a" style="left:200px;top:79px;width:662px;height:662px;background:#ffffff;"></div>
<div class="a" style="left:530px;top:70px;width:1px;height:680px;background:#7ff5f5;"></div>
<div class="a" style="left:66px;top:409px;width:932px;height:1px;background:#7ff5f5;"></div>
<svg style="left:0;top:0" width="1200" height="765"><ellipse cx="531" cy="409.8" rx="265.5" ry="273.5" fill="none" stroke="#1a1a1a" stroke-width="0.85" stroke-dasharray="3 2.5"/></svg>
<div class="a" style="left:998px;top:58px;width:10px;height:692px;background:linear-gradient(90deg,#3a3a3a,#474747)"></div>
<div class="a" style="left:54px;top:750px;width:944px;height:11px;background:linear-gradient(#3a3a3a,#474747)"></div>
<div class="a" style="left:998px;top:750px;width:10px;height:11px;background:#555;"></div>
<div class="a" style="left:54px;top:750px;width:32px;height:11px;background:#3c3c3c;"></div>
<div class="a" style="left:86px;top:750px;width:137px;height:11px;background:#535353;"></div>
<div class="a t" style="left:62px;top:752px;font-size:9px;color:#c8d4e4;transform-origin:0 0;transform:scaleX(0.8326);">50%</div>
<div class="a" style="left:87px;top:752px;width:13px;height:7px;background:#b0b0b0;border-radius:1px;"></div>
<svg style="left:88px;top:753px" width="11" height="5"><path d="M2.5 0L5 2.5L2.5 5L0 2.5Z" fill="#333"/><path d="M8.5 0L11 2.5L8.5 5L6 2.5Z" fill="#333"/></svg>
<div class="a t" style="left:126px;top:752px;font-size:9px;color:#e8e8e8;transform-origin:0 0;transform:scaleX(0.8784);">文档:11.4M/0 字节</div>
<svg style="left:216px;top:752px" width="6" height="8"><path d="M0 0l5 3.5L0 7z" fill="#ddd"/></svg>
<div class="a" style="left:1008px;top:44px;width:2px;height:718px;background:#2a2a2a;"></div>
<div class="a" style="left:1010px;top:45px;width:25px;height:8px;background:#3a3a3a;"></div>
<div class="a" style="left:1010px;top:53px;width:25px;height:708px;background:#535353;"></div>
<div class="a" style="left:1035px;top:44px;width:2px;height:718px;background:#2a2a2a;"></div>
<div class="a" style="left:1010px;top:79px;width:25px;height:1px;background:#3e3e3e;"></div>
<div class="a" style="left:1010px;top:106px;width:25px;height:1px;background:#3e3e3e;"></div>
<div class="a" style="left:1010px;top:151px;width:25px;height:1px;background:#3e3e3e;"></div>
<div class="a" style="left:1016px;top:55px;width:2px;height:2px;background:#2e2e2e;"></div>
<div class="a" style="left:1020px;top:55px;width:2px;height:2px;background:#2e2e2e;"></div>
<div class="a" style="left:1024px;top:55px;width:2px;height:2px;background:#2e2e2e;"></div>
<div class="a" style="left:1028px;top:55px;width:2px;height:2px;background:#2e2e2e;"></div>
<div class="a" style="left:1016px;top:82px;width:2px;height:2px;background:#2e2e2e;"></div>
<div class="a" style="left:1020px;top:82px;width:2px;height:2px;background:#2e2e2e;"></div>
<div class="a" style="left:1024px;top:82px;width:2px;height:2px;background:#2e2e2e;"></div>
<div class="a" style="left:1028px;top:82px;width:2px;height:2px;background:#2e2e2e;"></div>
<div class="a" style="left:1016px;top:108px;width:2px;height:2px;background:#2e2e2e;"></div>
<div class="a" style="left:1020px;top:108px;width:2px;height:2px;background:#2e2e2e;"></div>
<div class="a" style="left:1024px;top:108px;width:2px;height:2px;background:#2e2e2e;"></div>
<div class="a" style="left:1028px;top:108px;width:2px;height:2px;background:#2e2e2e;"></div>
<div class="a" style="left:1013px;top:133px;width:19px;height:15px;background:#3a3a3a;border-radius:2px;"></div>
<div class="a t" style="left:1018px;top:116px;font-size:12px;color:#ddd;">A</div>
<div class="a" style="left:1028px;top:116px;width:1px;height:12px;background:#888;"></div>
<div class="a t" style="left:1019px;top:135px;font-size:12px;color:#eee;font-weight:bold">¶</div>
<div class="a" style="left:1037px;top:45px;width:159px;height:8px;background:#3a3a3a;"></div>
<svg style="left:1187px;top:47px" width="8" height="5"><path d="M0 0l3 2.5L0 5zM4 0l3 2.5L4 5z" fill="#bbb"/></svg>
<div class="a" style="left:1037px;top:53px;width:158px;height:10.5px;background:#424242;"></div>
<div class="a" style="left:1037px;top:53px;width:25px;height:10.5px;background:#535353;"></div>
<div class="a t" style="left:1042px;top:55px;font-size:9px;color:#e8e8e8;">颜色</div>
<div class="a" style="left:1087px;top:53px;width:1px;height:10.5px;background:#3a3a3a;"></div>
<div class="a t" style="left:1067px;top:55px;font-size:9px;color:#a8a8a8;">色板</div>
<svg style="left:1182px;top:55px" width="12" height="7"><path d="M0 2.5h3l-1.5 2z" fill="#ccc"/><path d="M4 1h7M4 3.5h7M4 6h7" stroke="#ccc" stroke-width="1.2"/></svg>
<div class="a" style="left:1037px;top:63px;width:158px;height:73px;background:#535353;"></div>
<div class="a" style="left:1040px;top:72px;width:13px;height:12px;background:#000;outline:1px solid #888;"></div>
<div class="a" style="left:1047px;top:78px;width:12px;height:13px;background:#fff;"></div>
<div class="a" style="left:1040px;top:72px;width:13px;height:12px;background:#000;border:1px solid #999;"></div>
<div class="a t" style="left:1065px;top:74.0px;font-size:9px;color:#d8d8d8;">R</div>
<div class="a" style="left:1075px;top:73.0px;width:75px;height:4px;background:linear-gradient(90deg,#000,#ff0000);border:1px solid #888"></div>
<svg style="left:1073px;top:78.0px" width="8" height="6"><path d="M0 5.5L4 0.5L8 5.5z" fill="#aaa"/></svg>
<div class="a" style="left:1154px;top:71.0px;width:25px;height:13px;background:#3c3c3c;border:1px solid #464646;"></div>
<div class="a t" style="left:1157px;top:73.0px;font-size:9px;color:#e8e8e8;">0</div>
<div class="a t" style="left:1065px;top:90.5px;font-size:9px;color:#d8d8d8;">G</div>
<div class="a" style="left:1075px;top:89.5px;width:75px;height:4px;background:linear-gradient(90deg,#000,#00ff00);border:1px solid #888"></div>
<svg style="left:1073px;top:94.5px" width="8" height="6"><path d="M0 5.5L4 0.5L8 5.5z" fill="#aaa"/></svg>
<div class="a" style="left:1154px;top:87.5px;width:25px;height:13px;background:#3c3c3c;border:1px solid #464646;"></div>
<div class="a t" style="left:1157px;top:89.5px;font-size:9px;color:#e8e8e8;">0</div>
<div class="a t" style="left:1065px;top:107.0px;font-size:9px;color:#d8d8d8;">B</div>
<div class="a" style="left:1075px;top:106.0px;width:75px;height:4px;background:linear-gradient(90deg,#000,#0000ff);border:1px solid #888"></div>
<svg style="left:1073px;top:111.0px" width="8" height="6"><path d="M0 5.5L4 0.5L8 5.5z" fill="#aaa"/></svg>
<div class="a" style="left:1154px;top:104.0px;width:25px;height:13px;background:#3c3c3c;border:1px solid #464646;"></div>
<div class="a t" style="left:1157px;top:106.0px;font-size:9px;color:#e8e8e8;">0</div>
<div class="a" style="left:1040px;top:124px;width:138px;height:10px;background:linear-gradient(90deg,#f00 0%,#ff0 17%,#0a0 28%,#0ff 45%,#00f 65%,#f0f 82%,#f00 100%)"></div>
<div class="a" style="left:1040px;top:124px;width:138px;height:10px;background:linear-gradient(#fff0 0%,#0000 100%),linear-gradient(rgba(255,255,255,.55),rgba(255,255,255,0) 50%,rgba(0,0,0,0) 50%,rgba(0,0,0,.6))"></div>
<div class="a" style="left:1178px;top:124px;width:6px;height:5px;background:#fff;"></div>
<div class="a" style="left:1178px;top:129px;width:6px;height:5px;background:#000;"></div>
<div class="a" style="left:1037px;top:136px;width:158px;height:4px;background:#2e2e2e;"></div>
<div class="a" style="left:1037px;top:140px;width:158px;height:11px;background:#424242;"></div>
<div class="a" style="left:1037px;top:140px;width:25px;height:11px;background:#535353;"></div>
<div class="a t" style="left:1042px;top:142px;font-size:9px;color:#e8e8e8;">调整</div>
<div class="a" style="left:1087px;top:140px;width:1px;height:11px;background:#3a3a3a;"></div>
<div class="a t" style="left:1067px;top:142px;font-size:9px;color:#a8a8a8;">样式</div>
<svg style="left:1182px;top:142px" width="12" height="7"><path d="M0 2.5h3l-1.5 2z" fill="#ccc"/><path d="M4 1h7M4 3.5h7M4 6h7" stroke="#ccc" stroke-width="1.2"/></svg>
<div class="a" style="left:1037px;top:151px;width:158px;height:75px;background:#535353;"></div>
<div class="a t" style="left:1043px;top:156px;font-size:9px;color:#f0f0f0;transform-origin:0 0;transform:scaleX(0.8611);">添加调整</div>
<div class="a" style="left:1037px;top:226px;width:158px;height:2px;background:#2e2e2e;"></div>
<div class="a" style="left:1037px;top:228px;width:158px;height:10px;background:#424242;"></div>
<div class="a" style="left:1037px;top:228px;width:25px;height:10px;background:#535353;"></div>
<div class="a t" style="left:1042px;top:230px;font-size:9px;color:#e8e8e8;">图层</div>
<div class="a" style="left:1087px;top:228px;width:1px;height:10px;background:#3a3a3a;"></div>
<div class="a t" style="left:1067px;top:230px;font-size:9px;color:#a8a8a8;">通道</div>
<div class="a" style="left:1113px;top:228px;width:1px;height:10px;background:#3a3a3a;"></div>
<div class="a t" style="left:1093px;top:230px;font-size:9px;color:#a8a8a8;">路径</div>
<svg style="left:1182px;top:230px" width="12" height="7"><path d="M0 2.5h3l-1.5 2z" fill="#ccc"/><path d="M4 1h7M4 3.5h7M4 6h7" stroke="#ccc" stroke-width="1.2"/></svg>
<div class="a" style="left:1037px;top:238px;width:158px;height:511px;background:#535353;"></div>
<div class="a" style="left:1040px;top:241px;width:46px;height:13px;background:linear-gradient(#606060,#505050);border:1px solid #3a3a3a;border-radius:2px"></div>
<div class="a t" style="left:1045px;top:243px;font-size:9px;color:#f0f0f0;">ρ 类型</div>
<svg style="left:1079px;top:244px" width="5" height="8"><path d="M0.5 3L2.5 0.5L4.5 3ZM0.5 5L2.5 7.5L4.5 5Z" fill="#ddd"/></svg>
<div class="a" style="left:1187px;top:243px;width:6px;height:11px;background:#3a3a3a;"></div>
<div class="a" style="left:1187px;top:243px;width:6px;height:5px;background:#999;"></div>
<div class="a" style="left:1037px;top:257px;width:158px;height:1px;background:#444;"></div>
<div class="a" style="left:1040px;top:260px;width:72px;height:13px;background:linear-gradient(#606060,#505050);border:1px solid #3a3a3a;border-radius:2px"></div>
<div class="a t" style="left:1045px;top:262px;font-size:9px;color:#f0f0f0;">正常</div>
<svg style="left:1106px;top:263px" width="5" height="8"><path d="M0.5 3L2.5 0.5L4.5 3ZM0.5 5L2.5 7.5L4.5 5Z" fill="#ddd"/></svg>
<div class="a t" style="left:1118px;top:262px;font-size:9px;color:#e0e0e0;transform-origin:0 0;transform:scaleX(0.8828);">不透明度:</div>
<div class="a" style="left:1156px;top:260px;width:23px;height:13px;background:#363636;"></div>
<div class="a t" style="left:1158px;top:262px;font-size:9px;color:#e8e8e8;transform-origin:0 0;transform:scaleX(0.8250);">100%</div>
<div class="a" style="left:1179px;top:260px;width:13px;height:13px;background:linear-gradient(#666,#555);border:1px solid #3a3a3a"></div>
<svg style="left:1183px;top:265px" width="6" height="4"><path d="M0 0h5l-2.5 3z" fill="#ddd"/></svg>
<div class="a" style="left:1037px;top:276px;width:158px;height:1px;background:#444;"></div>
<div class="a t" style="left:1041px;top:281px;font-size:9px;color:#e0e0e0;transform-origin:0 0;transform:scaleX(0.9261);">锁定:</div>
<div class="a t" style="left:1134px;top:281px;font-size:9px;color:#e0e0e0;transform-origin:0 0;transform:scaleX(0.8774);">填充:</div>
<div class="a" style="left:1156px;top:279px;width:23px;height:12px;background:#363636;"></div>
<div class="a t" style="left:1158px;top:281px;font-size:9px;color:#e8e8e8;transform-origin:0 0;transform:scaleX(0.8250);">100%</div>
<div class="a" style="left:1179px;top:279px;width:13px;height:12px;background:linear-gradient(#666,#555);border:1px solid #3a3a3a"></div>
<svg style="left:1183px;top:284px" width="6" height="4"><path d="M0 0h5l-2.5 3z" fill="#ddd"/></svg>
<div class="a" style="left:1037px;top:295px;width:158px;height:1px;background:#3a3a3a;"></div>
<div class="a" style="left:1037px;top:296px;width:148px;height:453px;background:#474747;"></div>
<div class="a" style="left:1185px;top:296px;width:10px;height:453px;background:#3e3e3e;"></div>
<div class="a" style="left:1057px;top:296px;width:128px;height:25px;background:#6a7d98;"></div>
<div class="a" style="left:1037px;top:321px;width:148px;height:1px;background:#3a3a3a;"></div>
<div class="a" style="left:1037px;top:347px;width:148px;height:1px;background:#3a3a3a;"></div>
<div class="a" style="left:1057px;top:296px;width:1px;height:51px;background:#3a3a3a;"></div>
<div class="a" style="left:1059px;top:298px;width:21px;height:20px;background-color:#fff;background-image:linear-gradient(45deg,#ccc 25%,transparent 25%,transparent 75%,#ccc 75%),linear-gradient(45deg,#ccc 25%,transparent 25%,transparent 75%,#ccc 75%);background-size:6px 6px;background-position:0 0,3px 3px;outline:1px solid #222"></div>
<div class="a t" style="left:1087px;top:304px;font-size:9px;color:#f0f0f0;transform-origin:0 0;transform:scaleX(0.9014);">图层 1</div>
<div class="a" style="left:1059px;top:324px;width:21px;height:20px;background:#fff;outline:1px solid #222;"></div>
<div class="a t" style="left:1088px;top:330px;font-size:9px;color:#f0f0f0;transform-origin:0 0;transform:scaleX(0.8889);font-style:italic">背景</div>
<div class="a" style="left:1037px;top:749px;width:158px;height:12px;background:#535353;border-top:1px solid #3a3a3a;"></div>
<div class="a" style="left:854px;top:105px;width:154px;height:150px;background:#2e2e2e;"></div>
<div class="a" style="left:855px;top:107px;width:153px;height:12px;background:#424242;"></div>
<div class="a" style="left:882px;top:107px;width:26px;height:12px;background:#535353;"></div>
<div class="a t" style="left:860px;top:109px;font-size:9px;color:#a8a8a8;">字符</div>
<div class="a t" style="left:886px;top:109px;font-size:9px;color:#e8e8e8;">段落</div>
<svg style="left:983px;top:111px" width="8" height="5"><path d="M0 0l3 2.5L0 5zM4 0l3 2.5L4 5z" fill="#ccc"/></svg>
<div class="a" style="left:992px;top:109px;width:1px;height:8px;background:#666;"></div>
<svg style="left:996px;top:110px" width="12" height="7"><path d="M0 2.5h3l-1.5 2z" fill="#ccc"/><path d="M4 1h7M4 3.5h7M4 6h7" stroke="#ccc" stroke-width="1.2"/></svg>
<div class="a" style="left:855px;top:119px;width:153px;height:135px;background:#535353;"></div>
<svg style="left:870px;top:126px" width="14" height="10"><rect x="1" y="1" width="12" height="2" fill="#ccc"/><rect x="1" y="4" width="12" height="2" fill="#ccc"/><rect x="1" y="7" width="12" height="2" fill="#ccc"/></svg>
<svg style="left:886px;top:126px" width="14" height="10"><rect x="1" y="1" width="12" height="2" fill="#ccc"/><rect x="1" y="4" width="12" height="2" fill="#ccc"/><rect x="1" y="7" width="12" height="2" fill="#ccc"/></svg>
<svg style="left:902px;top:126px" width="14" height="10"><rect x="1" y="1" width="12" height="2" fill="#ccc"/><rect x="1" y="4" width="12" height="2" fill="#ccc"/><rect x="1" y="7" width="12" height="2" fill="#ccc"/></svg>
<svg style="left:924px;top:126px" width="14" height="10"><rect x="1" y="1" width="12" height="2" fill="#ccc"/><rect x="1" y="4" width="12" height="2" fill="#ccc"/><rect x="1" y="7" width="12" height="2" fill="#ccc"/></svg>
<svg style="left:940px;top:126px" width="14" height="10"><rect x="1" y="1" width="12" height="2" fill="#ccc"/><rect x="1" y="4" width="12" height="2" fill="#ccc"/><rect x="1" y="7" width="12" height="2" fill="#ccc"/></svg>
<svg style="left:956px;top:126px" width="14" height="10"><rect x="1" y="1" width="12" height="2" fill="#ccc"/><rect x="1" y="4" width="12" height="2" fill="#ccc"/><rect x="1" y="7" width="12" height="2" fill="#ccc"/></svg>
<div class="a" style="left:978px;top:124px;width:15px;height:14px;background:#3a3a3a;border-radius:2px;"></div>
<svg style="left:978px;top:126px" width="14" height="10"><rect x="1" y="1" width="12" height="2" fill="#ccc"/><rect x="1" y="4" width="12" height="2" fill="#ccc"/><rect x="1" y="7" width="12" height="2" fill="#ccc"/></svg>
<div class="a" style="left:858px;top:143px;width:147px;height:1px;background:#444;"></div>
<div class="a" style="left:875px;top:146px;width:36px;height:13px;background:#3a3a3a;"></div>
<div class="a t" style="left:877px;top:148px;font-size:9px;color:#e8e8e8;">0 点</div>
<div class="a" style="left:951px;top:146px;width:36px;height:13px;background:#3a3a3a;"></div>
<div class="a t" style="left:953px;top:148px;font-size:9px;color:#e8e8e8;">0 点</div>
<div class="a" style="left:875px;top:162px;width:36px;height:13px;background:#3a3a3a;"></div>
<div class="a t" style="left:877px;top:164px;font-size:9px;color:#e8e8e8;">0 点</div>
<div class="a" style="left:875px;top:181px;width:36px;height:13px;background:#3a3a3a;"></div>
<div class="a t" style="left:877px;top:183px;font-size:9px;color:#e8e8e8;">0 点</div>
<div class="a" style="left:951px;top:181px;width:36px;height:13px;background:#3a3a3a;"></div>
<div class="a t" style="left:953px;top:183px;font-size:9px;color:#e8e8e8;">0 点</div>
<svg style="left:860px;top:148px" width="12" height="10"><rect x="4" y="1" width="7" height="2" fill="#bbb"/><rect x="4" y="4" width="7" height="2" fill="#bbb"/><rect x="4" y="7" width="7" height="2" fill="#bbb"/><rect x="0" y="4" width="3" height="1" fill="#bbb"/></svg>
<svg style="left:935px;top:148px" width="12" height="10"><rect x="4" y="1" width="7" height="2" fill="#bbb"/><rect x="4" y="4" width="7" height="2" fill="#bbb"/><rect x="4" y="7" width="7" height="2" fill="#bbb"/><rect x="0" y="4" width="3" height="1" fill="#bbb"/></svg>
<svg style="left:860px;top:163px" width="12" height="10"><rect x="4" y="1" width="7" height="2" fill="#bbb"/><rect x="4" y="4" width="7" height="2" fill="#bbb"/><rect x="4" y="7" width="7" height="2" fill="#bbb"/><rect x="0" y="4" width="3" height="1" fill="#bbb"/></svg>
<svg style="left:860px;top:182px" width="12" height="10"><rect x="4" y="1" width="7" height="2" fill="#bbb"/><rect x="4" y="4" width="7" height="2" fill="#bbb"/><rect x="4" y="7" width="7" height="2" fill="#bbb"/><rect x="0" y="4" width="3" height="1" fill="#bbb"/></svg>
<svg style="left:934px;top:182px" width="12" height="10"><rect x="4" y="1" width="7" height="2" fill="#bbb"/><rect x="4" y="4" width="7" height="2" fill="#bbb"/><rect x="4" y="7" width="7" height="2" fill="#bbb"/><rect x="0" y="4" width="3" height="1" fill="#bbb"/></svg>
<div class="a" style="left:858px;top:179px;width:147px;height:1px;background:#444;"></div>
<div class="a" style="left:858px;top:197px;width:147px;height:1px;background:#444;"></div>
<div class="a t" style="left:864px;top:203px;font-size:9px;color:#e0e0e0;transform-origin:0 0;transform:scaleX(0.9005);">避头尾法则设置:</div>
<div class="a" style="left:928px;top:201px;width:72px;height:13px;background:linear-gradient(#606060,#505050);border:1px solid #3a3a3a;border-radius:2px"></div>
<div class="a t" style="left:933px;top:203px;font-size:9px;color:#f0f0f0;transform-origin:0 0;transform:scaleX(0.7758);">JIS 宽松</div>
<svg style="left:994px;top:204px" width="5" height="8"><path d="M0.5 3L2.5 0.5L4.5 3ZM0.5 5L2.5 7.5L4.5 5Z" fill="#ddd"/></svg>
<div class="a t" style="left:872px;top:220px;font-size:9px;color:#e0e0e0;transform-origin:0 0;transform:scaleX(0.9024);">间距组合设置:</div>
<div class="a" style="left:928px;top:218px;width:72px;height:13px;background:linear-gradient(#606060,#505050);border:1px solid #3a3a3a;border-radius:2px"></div>
<div class="a t" style="left:933px;top:220px;font-size:9px;color:#f0f0f0;transform-origin:0 0;transform:scaleX(0.8273);">间距组合 4</div>
<svg style="left:994px;top:221px" width="5" height="8"><path d="M0.5 3L2.5 0.5L4.5 3ZM0.5 5L2.5 7.5L4.5 5Z" fill="#ddd"/></svg>
<div class="a" style="left:858px;top:234px;width:147px;height:1px;background:#444;"></div>
<div class="a" style="left:863px;top:241px;width:9px;height:9px;background:#4a4a4a;border:1px solid #2e2e2e;"></div>
<svg style="left:864px;top:241px" width="9" height="9"><path d="M2 4.5L4 7L8 0.5" fill="none" stroke="#ddd" stroke-width="1.2"/></svg>
<div class="a t" style="left:876px;top:242px;font-size:9px;color:#e0e0e0;">连字</div>
<div class="a" style="left:8px;top:64px;width:20px;height:16px;background:#3c3c3c;border-radius:2px;"></div>
<svg style="left:11px;top:66px" width="14" height="11"><ellipse cx="7" cy="5.5" rx="5.5" ry="4.5" fill="none" stroke="#ddd" stroke-width="1.1" stroke-dasharray="2 1"/></svg>
<svg style="left:24px;top:76px" width="3" height="3"><path d="M2.5 0.5V2.5H0.5z" fill="#aaa"/></svg>
<svg style="left:33px;top:66px" width="14" height="12"><path d="M1 0L1 9L3.5 7L5.5 10.5L7 9.5L5 6.5L8 6.5Z" fill="#c8c8c8"/><path d="M9 6.5h5M11.5 4v5" stroke="#c8c8c8" stroke-width="1.2"/></svg>
<svg style="left:11px;top:82px" width="14" height="12"><ellipse cx="7" cy="4.5" rx="5.5" ry="3.5" fill="none" stroke="#c8c8c8" stroke-width="1.3"/><path d="M3 7.5q-1 2 1 3.5" fill="none" stroke="#c8c8c8" stroke-width="1.2"/></svg>
<svg style="left:23px;top:91px" width="3" height="3"><path d="M2.5 0.5V2.5H0.5z" fill="#aaa"/></svg>
<svg style="left:33px;top:82px" width="14" height="12"><path d="M12.5 1L7 6.5L8 8L13.5 2.5Z" fill="#c8c8c8"/><path d="M2 6q2 4 6 3l-1.5-2.5q-2 0-4.5-.5z" fill="#c8c8c8"/><path d="M1.5 5q0-3 4-3" stroke="#c8c8c8" stroke-dasharray="1 1" fill="none"/></svg>
<svg style="left:45px;top:91px" width="3" height="3"><path d="M2.5 0.5V2.5H0.5z" fill="#aaa"/></svg>
<svg style="left:11px;top:98px" width="14" height="12"><path d="M3 0V9H12M0 3H9V12" fill="none" stroke="#c8c8c8" stroke-width="2"/></svg>
<svg style="left:23px;top:108px" width="3" height="3"><path d="M2.5 0.5V2.5H0.5z" fill="#aaa"/></svg>
<svg style="left:33px;top:98px" width="14" height="12"><path d="M2 11L8 5M10.5 1.5l2 2l-3 3l-2-2z" stroke="#c8c8c8" stroke-width="1.6" fill="#c8c8c8"/></svg>
<svg style="left:45px;top:108px" width="3" height="3"><path d="M2.5 0.5V2.5H0.5z" fill="#aaa"/></svg>
<div class="a" style="left:9px;top:115px;width:40px;height:1px;background:#3e3e3e;"></div>
<svg style="left:11px;top:119px" width="15" height="12"><path d="M2 9L10 1.5L13.5 4.5L5 11.5Z" fill="#c8c8c8"/><path d="M1 2q1-2 3-1" stroke="#aaa" stroke-dasharray="1 1" fill="none"/></svg>
<svg style="left:24px;top:128px" width="3" height="3"><path d="M2.5 0.5V2.5H0.5z" fill="#aaa"/></svg>
<svg style="left:33px;top:119px" width="13" height="12"><path d="M12.5 0.5L6 7L7.5 8L13 1.5Z" fill="#c8c8c8"/><path d="M1 10.5q2 .5 5-1.5l-1.5-1.5q-3 1-3.5 3z" fill="#c8c8c8"/></svg>
<svg style="left:45px;top:128px" width="3" height="3"><path d="M2.5 0.5V2.5H0.5z" fill="#aaa"/></svg>
<svg style="left:11px;top:136px" width="13" height="12"><circle cx="6.5" cy="2.5" r="2" fill="#c8c8c8"/><rect x="5.5" y="3.5" width="2" height="4" fill="#c8c8c8"/><rect x="1" y="7.5" width="11" height="2" fill="#c8c8c8"/><rect x="1" y="10.5" width="11" height="1.3" fill="#c8c8c8"/></svg>
<svg style="left:24px;top:146px" width="3" height="3"><path d="M2.5 0.5V2.5H0.5z" fill="#aaa"/></svg>
<svg style="left:33px;top:136px" width="13" height="12"><path d="M12.5 1L6 7.5L7.5 8.5L13 2Z" fill="#c8c8c8"/><path d="M1 11q2 .5 5-1.5l-1.5-1.5q-3 1-3.5 3z" fill="#c8c8c8"/><path d="M2 2h6" stroke="#c8c8c8" stroke-dasharray="1 1"/></svg>
<svg style="left:45px;top:146px" width="3" height="3"><path d="M2.5 0.5V2.5H0.5z" fill="#aaa"/></svg>
<svg style="left:11px;top:154px" width="14" height="11"><path d="M1 7L7 1H13V4L7 10H1Z" fill="#c8c8c8"/><path d="M1 7H7L13 1" stroke="#777" fill="none"/></svg>
<svg style="left:24px;top:163px" width="3" height="3"><path d="M2.5 0.5V2.5H0.5z" fill="#aaa"/></svg>
<div class="a" style="left:34px;top:156px;width:11px;height:9px;background:linear-gradient(90deg,#333,#ddd);border:1px solid #ccc"></div>
<svg style="left:45px;top:163px" width="3" height="3"><path d="M2.5 0.5V2.5H0.5z" fill="#aaa"/></svg>
<svg style="left:12px;top:172px" width="10" height="11"><path d="M5 0Q8 5 8.5 7A3.5 3.5 0 0 1 1.5 7Q2 5 5 0Z" fill="#c8c8c8"/></svg>
<svg style="left:24px;top:181px" width="3" height="3"><path d="M2.5 0.5V2.5H0.5z" fill="#aaa"/></svg>
<svg style="left:34px;top:172px" width="11" height="11"><circle cx="4" cy="4" r="3.5" fill="#c8c8c8"/><path d="M6.5 6.5L10.5 10.5" stroke="#c8c8c8" stroke-width="1.8"/></svg>
<svg style="left:45px;top:181px" width="3" height="3"><path d="M2.5 0.5V2.5H0.5z" fill="#aaa"/></svg>
<div class="a" style="left:9px;top:186px;width:40px;height:1px;background:#3e3e3e;"></div>
<svg style="left:12px;top:190px" width="12" height="11"><path d="M1 10.5L3 5L8 1L11 4L7 9Z" fill="#c8c8c8"/><path d="M1 10.5L5 6.5" stroke="#555"/></svg>
<svg style="left:24px;top:199px" width="3" height="3"><path d="M2.5 0.5V2.5H0.5z" fill="#aaa"/></svg>
<div class="a t" style="left:35px;top:189px;font-size:13px;color:#d0d0d0;font-family:'Liberation Serif',serif">T</div>
<svg style="left:45px;top:199px" width="3" height="3"><path d="M2.5 0.5V2.5H0.5z" fill="#aaa"/></svg>
<svg style="left:14px;top:208px" width="8" height="11"><path d="M0.5 0.5V9L2.8 7L4.5 10.5L6 9.8L4.3 6.3H7.5Z" fill="none" stroke="#c8c8c8" stroke-width="1"/></svg>
<svg style="left:24px;top:217px" width="3" height="3"><path d="M2.5 0.5V2.5H0.5z" fill="#aaa"/></svg>
<div class="a" style="left:35px;top:209px;width:10px;height:8px;background:linear-gradient(#999,#bbb);border:1px solid #ccc"></div>
<svg style="left:45px;top:217px" width="3" height="3"><path d="M2.5 0.5V2.5H0.5z" fill="#aaa"/></svg>
<div class="a" style="left:9px;top:222px;width:40px;height:1px;background:#3e3e3e;"></div>
<svg style="left:12px;top:226px" width="12" height="12"><path d="M3 11L1 6.5L2 6L4 8V2h1.2v5V1h1.3v6V1.5h1.3V7V2.5h1.2V8l1.2-1.5h1.3L8.5 11Z" fill="#c8c8c8"/></svg>
<svg style="left:24px;top:236px" width="3" height="3"><path d="M2.5 0.5V2.5H0.5z" fill="#aaa"/></svg>
<svg style="left:34px;top:227px" width="12" height="11"><circle cx="4.5" cy="4.5" r="3.8" fill="#c8c8c8"/><path d="M7.5 7.5L11 10.5" stroke="#c8c8c8" stroke-width="1.8"/></svg>
<div class="a" style="left:24px;top:255px;width:17px;height:16px;background:#ffffff;"></div>
<div class="a" style="left:14px;top:244px;width:17px;height:17px;background:#000000;border:1px solid #9a9a9a;"></div>
<svg style="left:35px;top:242px" width="4" height="4"><path d="M0 0h3v3" fill="none" stroke="#ccc"/></svg>
<svg style="left:12px;top:266px" width="8" height="7"><rect x="0.5" y="0.5" width="4" height="4" fill="#000" stroke="#ccc"/><rect x="3.5" y="3" width="4" height="4" fill="#ddd"/></svg>
<div class="a" style="left:12px;top:280px;width:11px;height:9px;border:1px solid #bbb;background:#444"></div>
<svg style="left:14px;top:282px" width="7" height="5"><ellipse cx="3.5" cy="2.5" rx="2.7" ry="2" fill="none" stroke="#ccc" stroke-dasharray="1 1"/></svg>
<svg style="left:34px;top:280px" width="12" height="10"><rect x="4.5" y="0.5" width="7" height="6" fill="#888" stroke="#bbb"/><rect x="0.5" y="3.5" width="7" height="6" fill="#999" stroke="#bbb"/></svg>
<svg style="left:45px;top:289px" width="3" height="3"><path d="M2.5 0.5V2.5H0.5z" fill="#aaa"/></svg>
<svg style="left:1068px;top:171px" width="13" height="12"><circle cx="6.5" cy="6" r="3" fill="none" stroke="#c4c4c4" stroke-width="1.5"/><path d="M6.5 0v2M6.5 10v2M0.5 6h2M10.5 6h2M2.3 1.8l1.4 1.4M9.3 8.8l1.4 1.4M2.3 10.2l1.4-1.4M9.3 3.2l1.4-1.4" stroke="#c4c4c4" stroke-width="1.2"/></svg>
<svg style="left:1084px;top:172px" width="12" height="10"><path d="M0 10V6L2 4L3 6L5 1L6 5L8 2L9 6L10 3L12 6V10Z" fill="#c4c4c4"/></svg>
<svg style="left:1101px;top:172px" width="11" height="11"><rect x="0.5" y="0.5" width="10" height="10" fill="#888" stroke="#c4c4c4"/><path d="M1 9Q5 9 6 5T10 1" stroke="#eee" fill="none" stroke-width="1.2"/><path d="M0 4h11M0 7h11M4 0v11M7 0v11" stroke="#aaa" stroke-width="0.5"/></svg>
<svg style="left:1116px;top:172px" width="11" height="11"><rect x="0.5" y="0.5" width="10" height="10" fill="#ddd" stroke="#aaa"/><path d="M0 11L11 0V11Z" fill="#333"/><path d="M2 3h3M3.5 1.5v3M6 8h3" stroke="#222"/></svg>
<svg style="left:1132px;top:172px" width="12" height="11"><path d="M0 0.5H12L6 11Z" fill="#bbb"/><circle cx="6" cy="4" r="2" fill="#888"/></svg>
<div class="a" style="left:1061px;top:190px;width:11px;height:10px;background:linear-gradient(90deg,#555,#ddd);border:1px solid #ccc"></div>
<svg style="left:1076px;top:189px" width="12" height="11"><path d="M6 0v9M2 2h8M0 7l2-5l2 5zM8 7l2-5l2 5zM3 10h6" stroke="#c4c4c4" fill="#c4c4c4" stroke-width="1"/></svg>
<div class="a" style="left:1093px;top:190px;width:10px;height:10px;background:linear-gradient(90deg,#333 50%,#ddd 50%);border:1px solid #ccc"></div>
<svg style="left:1108px;top:189px" width="13" height="12"><rect x="0" y="2" width="9" height="7" fill="#bbb"/><circle cx="5" cy="5.5" r="2.5" fill="#555"/><circle cx="9" cy="8.5" r="3.5" fill="#999" stroke="#ccc"/></svg>
<svg style="left:1124px;top:189px" width="12" height="12"><circle cx="6" cy="3.5" r="3.3" fill="#c4c4c4"/><circle cx="3.3" cy="8.3" r="3.3" fill="#c4c4c4"/><circle cx="8.7" cy="8.3" r="3.3" fill="#c4c4c4"/><path d="M6 6v2L4 9M6 8l2 1" stroke="#555"/></svg>
<svg style="left:1140px;top:190px" width="11" height="10"><rect x="0.5" y="0.5" width="10" height="9" fill="#999" stroke="#ccc"/><path d="M0 3.5h11M0 6.5h11M5.5 0v10M8 0v10" stroke="#555"/></svg>
<svg style="left:1069px;top:209px" width="11" height="9"><rect x="0.5" y="0.5" width="10" height="8" fill="#ddd" stroke="#aaa"/><path d="M1 8L10 1" stroke="#333" stroke-width="1.2"/><ellipse cx="6" cy="5" rx="2.5" ry="1.8" fill="#444"/></svg>
<div class="a" style="left:1085px;top:209px;width:11px;height:9px;background:linear-gradient(135deg,#555 20%,#ddd 45%,#777 70%,#ccc);border:1px solid #bbb"></div>
<svg style="left:1101px;top:209px" width="11" height="9"><rect x="0.5" y="0.5" width="10" height="8" fill="#ddd" stroke="#aaa"/><path d="M1 7L4 5L5 6L8 3L9 4L10 2" stroke="#222" stroke-width="1.6" fill="none"/></svg>
<svg style="left:1116px;top:209px" width="11" height="9"><rect x="0" y="0" width="11" height="9" fill="#999"/><path d="M0 0L5.5 4.5L0 9ZM11 0L5.5 4.5L11 9Z" fill="#666"/><path d="M0 0L5.5 4.5L11 0Z" fill="#ccc"/></svg>
<div class="a" style="left:1132px;top:209px;width:11px;height:9px;background:linear-gradient(90deg,#333,#ddd);border:1px solid #bbb"></div>
<svg style="left:1100px;top:244px" width="9" height="8"><rect x="0.5" y="0.5" width="8" height="7" fill="none" stroke="#c4c4c4"/><path d="M2 6L4 4L5 5L7 3V6Z" fill="#c4c4c4"/></svg>
<svg style="left:1116px;top:244px" width="9" height="9"><circle cx="4.5" cy="4.5" r="4" fill="#c4c4c4"/><path d="M2 7L7 2" stroke="#555" stroke-width="1.5"/></svg>
<div class="a t" style="left:1132px;top:243px;font-size:11px;color:#ccc;font-family:'Liberation Serif',serif">T</div>
<svg style="left:1148px;top:244px" width="9" height="9"><rect x="1.5" y="1.5" width="6" height="6" fill="none" stroke="#c4c4c4"/><rect x="0" y="0" width="3" height="3" fill="#c4c4c4"/><rect x="6" y="0" width="3" height="3" fill="#c4c4c4"/><rect x="0" y="6" width="3" height="3" fill="#c4c4c4"/><rect x="6" y="6" width="3" height="3" fill="#c4c4c4"/></svg>
<svg style="left:1164px;top:244px" width="9" height="9"><rect x="0" y="4" width="5" height="5" fill="#c4c4c4"/><path d="M3 4V1h4l2 2v6H5" fill="none" stroke="#c4c4c4"/></svg>
<div class="a" style="left:1066px;top:282px;width:8px;height:8px;background-color:#999;background-image:linear-gradient(45deg,#ddd 25%,transparent 25%,transparent 75%,#ddd 75%),linear-gradient(45deg,#ddd 25%,transparent 25%,transparent 75%,#ddd 75%);background-size:4px 4px;background-position:0 0,2px 2px"></div>
<svg style="left:1079px;top:280px" width="12" height="11"><path d="M11.5 0.5L5 7L6.5 8L12 1.5Z" fill="#c4c4c4"/><path d="M0.5 10.5q2 .5 5-1.5l-1.5-1.5q-3 1-3.5 3z" fill="#c4c4c4"/></svg>
<svg style="left:1094px;top:280px" width="10" height="11"><path d="M5 0v11M0 5.5h10" stroke="#c4c4c4" stroke-width="1.3"/><path d="M5 0l-2 2h4zM5 11l-2-2h4zM0 5.5l2-2v4zM10 5.5l-2-2v4z" fill="#c4c4c4"/></svg>
<svg style="left:1110px;top:281px" width="8" height="10"><path d="M2 4.5V3a2 2 0 0 1 4 0v1.5" fill="none" stroke="#c4c4c4" stroke-width="1.3"/><rect x="0.5" y="4.5" width="7" height="5" fill="#c4c4c4"/></svg>
<svg style="left:1042px;top:305px" width="10" height="6"><path d="M0.5 3Q5 -1.5 9.5 3Q5 7.5 0.5 3Z" fill="none" stroke="#ccc"/><circle cx="5" cy="3" r="1.5" fill="#ccc"/></svg>
<svg style="left:1042px;top:331px" width="10" height="6"><path d="M0.5 3Q5 -1.5 9.5 3Q5 7.5 0.5 3Z" fill="none" stroke="#ccc"/><circle cx="5" cy="3" r="1.5" fill="#ccc"/></svg>
<svg style="left:1166px;top:331px" width="8" height="9"><path d="M2 4V2.5a2 2 0 0 1 4 0V4" fill="none" stroke="#aaa" stroke-width="1.2"/><rect x="0.5" y="4" width="7" height="5" fill="none" stroke="#aaa"/></svg>
<svg style="left:1060px;top:752px" width="12" height="6"><path d="M4 0.5H2.5a2.5 2.5 0 0 0 0 5H4M8 0.5h1.5a2.5 2.5 0 0 1 0 5H8M4 3h4" fill="none" stroke="#ccc" stroke-width="1.1"/></svg>
<div class="a t" style="left:1080px;top:750px;font-size:10px;color:#ccc;font-family:'Liberation Serif',serif"><i>fx</i></div>
<svg style="left:1097px;top:751px" width="10" height="8"><rect x="0" y="0" width="10" height="8" fill="#ccc"/><circle cx="5" cy="4" r="2" fill="#444"/></svg>
<svg style="left:1115px;top:751px" width="9" height="9"><circle cx="4.5" cy="4.5" r="4" fill="#ccc"/><path d="M2 7L7 2" stroke="#555" stroke-width="1.4"/></svg>
<svg style="left:1132px;top:751px" width="10" height="8"><path d="M0 1H4L5 2H10V8H0Z" fill="#ccc"/></svg>
<svg style="left:1151px;top:751px" width="8" height="9"><path d="M2 0H8V8H2V5H0V3H2Z" fill="#ccc"/><path d="M0 9L3 6" stroke="#555"/></svg>
<svg style="left:1168px;top:750px" width="9" height="10"><path d="M0 2H9M3 2V0.5H6V2" fill="none" stroke="#ccc"/><path d="M1 3H8V10H1Z" fill="#ccc"/><path d="M3 4v5M6 4v5" stroke="#555"/></svg>
<svg style="left:1018px;top:62px" width="12" height="13"><rect x="0" y="0" width="3" height="3" fill="#ccc"/><rect x="0" y="4.5" width="3" height="3" fill="#ccc"/><rect x="0" y="9" width="3" height="3" fill="#ccc"/><path d="M6 2L8 1l-.5 2M7.5 1.5Q11 4 10 8Q9 11 6 12" fill="none" stroke="#ccc"/></svg>
<svg style="left:1017px;top:89px" width="13" height="12"><circle cx="3.5" cy="3.5" r="3" fill="#bbb"/><rect x="8" y="0" width="4" height="7" fill="#ddd"/><rect x="1" y="9" width="11" height="3" fill="#ddd"/></svg>
<svg style="left:1027px;top:47px" width="8" height="5"><path d="M3 0L0 2.5L3 5zM7 0L4 2.5L7 5z" fill="#bbb"/></svg>
<div class="a" style="left:1198px;top:711px;width:2px;height:31px;background:#2a7ae0;"></div>
<div class="a" style="left:137px;top:203px;width:357px;height:73.5px;border:3.5px solid #f24e4e;border-radius:2px"></div>
<div class="a t" style="left:167.3px;top:232px;font-size:19.5px;color:#f04848">点</div>
<div class="a t" style="left:187.1px;top:232px;font-size:19.5px;color:#f04848">击</div>
<div class="a t" style="left:206.9px;top:232px;font-size:19.5px;color:#f04848">这</div>
<div class="a t" style="left:226.7px;top:232px;font-size:19.5px;color:#f04848">里</div>
<div class="a t" style="left:246.5px;top:232px;font-size:19.5px;color:#f04848">的</div>
<div class="a t" style="left:276.3px;top:232px;font-size:21px;color:#f04848">“</div>
<div class="a t" style="left:286.1px;top:232px;font-size:19.5px;color:#f04848">拾</div>
<div class="a t" style="left:305.9px;top:232px;font-size:19.5px;color:#f04848">色</div>
<div class="a t" style="left:325.7px;top:232px;font-size:19.5px;color:#f04848">器</div>
<div class="a t" style="left:348.5px;top:234px;font-size:21px;color:#f04848">,</div>
<div class="a t" style="left:365.3px;top:232px;font-size:19.5px;color:#f04848">选</div>
<div class="a t" style="left:385.1px;top:232px;font-size:19.5px;color:#f04848">择</div>
<div class="a t" style="left:404.9px;top:232px;font-size:19.5px;color:#f04848">黑</div>
<div class="a t" style="left:424.7px;top:232px;font-size:19.5px;color:#f04848">色</div>
<div class="a t" style="left:445.0px;top:232px;font-size:21px;color:#f04848">”</div>
<svg style="left:0;top:0" width="1200" height="765"><path d="M123.5 236.3 L124.5 238.8 L47.8 253.8 L46.1 257.9 L23.3 253.3 L43.8 241.6 L46.7 249.2 Z" fill="#f04a4a"/></svg>
</body></html>
